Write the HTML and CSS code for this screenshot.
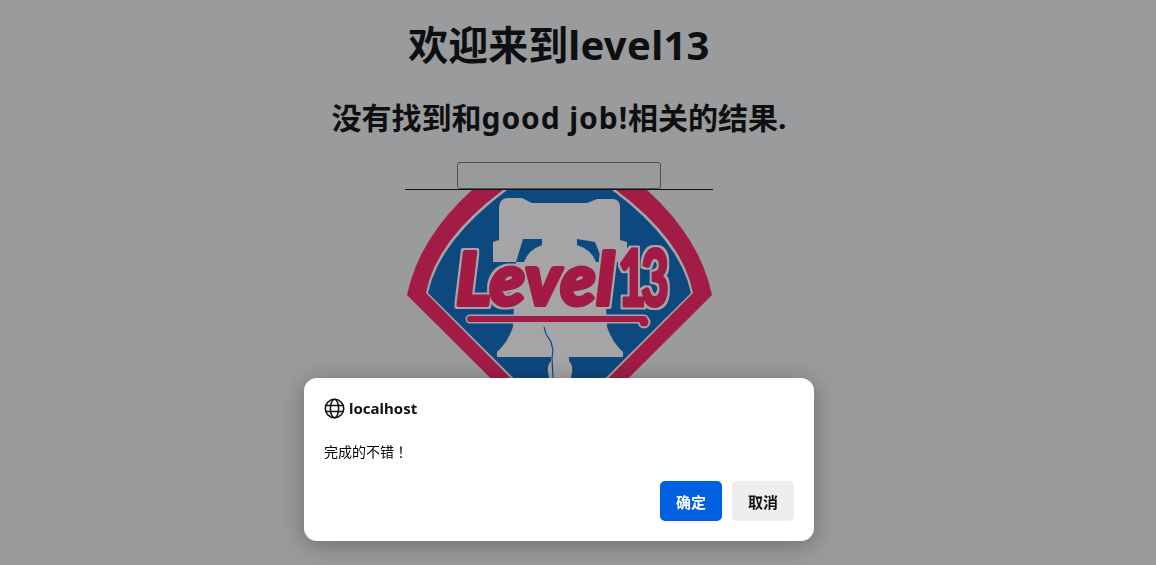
FILE: index.html
```html
<!DOCTYPE html>
<html lang="zh-CN">
<head>
<meta charset="utf-8">
<title>欢迎来到level13</title>
<link rel="stylesheet" href="styles.css">
</head>
<body>
<main class="page">
  <h1 class="title">欢迎来到<span class="latin-h1">level13</span></h1>
  <h2 class="result">没有找到和<span class="latin-h2">good job!</span>相关的结果.</h2>
  <form class="search"><input class="search-input" type="text"></form>
  <div class="logo">
    <svg class="logo-svg" width="308" height="270" viewBox="405 190 308 270" xmlns="http://www.w3.org/2000/svg">
      <defs>
        <filter id="soft" x="-5%" y="-5%" width="110%" height="110%"><feGaussianBlur stdDeviation="0.6"/></filter>
        <filter id="halo" x="-10%" y="-20%" width="120%" height="140%" color-interpolation-filters="sRGB">
          <feMorphology in="SourceAlpha" operator="dilate" radius="2" result="fat"/>
          <feFlood flood-color="#a5a5a7"/>
          <feComposite in2="fat" operator="in" result="edge"/>
          <feMerge><feMergeNode in="edge"/><feMergeNode in="SourceGraphic"/></feMerge>
          <feGaussianBlur stdDeviation="0.5"/>
        </filter>
      </defs>
      <g filter="url(#soft)">
        <path class="red" d="M407 295 Q419 238 472 190 L647 190 Q700 238 712 295 L559.5 447 Z"/>
        <path class="pale" d="M426 293 Q436 240 503 190 L616 190 Q683 240 693 293 L559.5 427 Z"/>
        <path class="blue" d="M428 293 Q439 241 507 190 L612 190 Q680 241 691 293 L559.5 424 Z"/>
        <path class="pale" d="M499 207 Q500 198 508 198 L522 198 L532 203 L587 203 L597 199 L612 199 Q620 199 620 207 L620 240 L627 242 L627 262 L493 262 L493 242 L499 240 Z"/>
        <path class="blue" d="M523 239 L542 239 L542 245 Q528 250 524 262 L516 262 Z"/>
        <path class="blue" d="M577 239 L595 242 L603 262 L596 262 Q592 250 577 245 Z"/>
        <path class="pale" d="M516 262 L604 262 L607 327 Q612 342 623 352 L623 357 L569 357 L569 361 Q573 365 572 372 L570 382 L550 382 L548 372 Q547 365 551 361 L551 357 L497 357 L497 352 Q508 342 513 327 Z"/>
        <path class="crack" d="M544 327 L546 334 L551 342 L553 350 L552 358 L553 378"/>
        <path class="rod-edge" d="M470 319 L644 319"/>
        <circle class="rod-edge-ball" cx="644" cy="322" r="6.5"/>
        <path class="rod" d="M470 319 L644 319"/>
        <circle class="rod-ball" cx="644" cy="322" r="4.5"/>
      </g>
      <g filter="url(#halo)">
        <text class="logo-word" x="456" y="305" textLength="158" lengthAdjust="spacing">Level</text>
        <text class="logo-num" transform="translate(618 306) scale(0.62 1)" x="0 37" y="0">13</text>
      </g>
    </svg>
  </div>
</main>
<div class="scrim"></div>
<div class="dialog-layer">
  <div class="dialog" role="alertdialog">
    <div class="origin">
      <svg class="globe" width="21" height="21" viewBox="0 0 20 20" fill="none" stroke="#111" stroke-width="1.5" xmlns="http://www.w3.org/2000/svg">
        <circle cx="10" cy="10" r="8.8"/>
        <ellipse cx="10" cy="10" rx="3.9" ry="8.8"/>
        <path d="M1.6 7.2 H18.4 M1.6 12.8 H18.4"/>
      </svg>
      <span class="host">localhost</span>
    </div>
    <p class="message">完成的不错<span class="bang" lang="zh-TW">！</span></p>
    <div class="actions">
      <button class="btn btn-primary" type="button">确定</button>
      <button class="btn btn-plain" type="button">取消</button>
    </div>
  </div>
</div>
</body>
</html>
```
FILE: styles.css
```css
html, body {
  margin: 0;
  height: 100%;
  overflow: hidden;
  background: #fff;
}
body {
  font-family: "Noto Sans", "Noto Sans CJK SC", sans-serif;
  color: #000;
}
.page {
  box-sizing: border-box;
  width: 1118px;
  padding: 0 10px;
  text-align: center;
}
.title {
  margin: 17px 0 0;
  font-size: 40px;
  line-height: 56px;
  font-weight: 700;
}
.latin-h1 { letter-spacing: 0.3px; }
.latin-h2 { letter-spacing: 0.9px; }
.result {
  margin: 24px 0 0;
  font-size: 30px;
  line-height: 42px;
  font-weight: 700;
}
.search {
  margin: 23px 0 0;
  height: 27px;
}
.search-input {
  box-sizing: border-box;
  display: block;
  width: 204px;
  height: 27px;
  margin: 0 auto;
  padding: 0;
  background: #fff;
  border: 1px solid #767676;
  border-radius: 3px;
}
.logo {
  position: relative;
  z-index: 2;
  width: 308px;
  margin: 0 auto;
  border-top: 1px solid #111;
}
.logo-svg {
  display: block;
}
.red { fill: #a31b45; }
.pale { fill: #a5a5a7; }
.blue { fill: #0f4a7e; }
.crack { fill: none; stroke: #0f4a7e; stroke-width: 1.2; }
.rod-edge { fill: none; stroke: #a5a5a7; stroke-width: 9; stroke-linecap: round; }
.rod-edge-ball { fill: #a5a5a7; }
.rod { fill: none; stroke: #a31b45; stroke-width: 6; stroke-linecap: round; }
.rod-ball { fill: #a31b45; }
.logo-word, .logo-num {
  font-family: "Lato", sans-serif;
  font-weight: 900;
  fill: #a31b45;
  stroke: #a31b45;
  stroke-linejoin: round;
}
.logo-word {
  font-size: 72px;
  font-style: italic;
  stroke-width: 4;
}
.logo-num {
  font-size: 78px;
  stroke-width: 3;
}
.scrim {
  position: fixed;
  inset: 0;
  z-index: 1;
  background: rgba(32, 33, 36, 0.45);
}
.dialog-layer {
  position: fixed;
  inset: 0;
  z-index: 3;
  box-sizing: border-box;
  padding: 0 38px 24px 0;
  display: flex;
  align-items: flex-end;
  justify-content: center;
}
.dialog {
  box-sizing: border-box;
  width: 510px;
  height: 163px;
  padding: 20px;
  background: #fff;
  border-radius: 13px;
  box-shadow: 0 4px 24px rgba(0, 0, 0, 0.3);
  color: #000;
}
.origin {
  display: flex;
  align-items: center;
  gap: 4px;
  height: 20px;
}
.host {
  font-size: 15px;
  font-weight: 700;
  color: #111;
}
.message {
  margin: 23px 0 0;
  height: 20px;
  font-size: 14px;
  line-height: 20px;
}
.bang { font-family: "Noto Sans CJK TC", sans-serif; }
.actions {
  display: flex;
  justify-content: flex-end;
  gap: 10px;
  margin-top: 20px;
}
.btn {
  width: 62px;
  height: 40px;
  padding: 0;
  border: 0;
  border-radius: 5px;
  font-family: inherit;
  font-size: 15px;
  font-weight: 700;
}
.btn-primary { background: #0060df; color: #fff; }
.btn-plain { background: #eee; color: #111; }
```
